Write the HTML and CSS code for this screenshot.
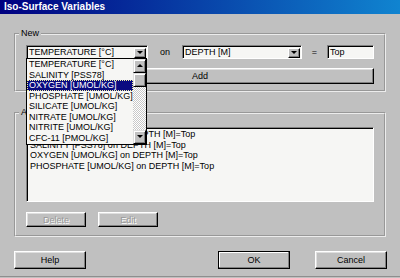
FILE: index.html
```html
<!DOCTYPE html>
<html lang="en">
<head>
    <meta charset="UTF-8">
    <meta name="viewport" content="width=device-width, initial-scale=1.0">
    <title>Iso-Surface Variables</title>
    <link rel="stylesheet" href="styles.css">
</head>
<body>
    <div class="dialog">
        <div class="titlebar">Iso-Surface Variables</div>
        <div class="dialog-body">
            <fieldset class="group">
                <legend>New</legend>
                <div class="group-body group-new">
                    <div class="var-row">
                        <div class="combo combo-var">
                            <span class="combo-text">TEMPERATURE [°C]</span>
                            <span class="combo-btn"></span>
                            <div class="dropdown">
                                <ul class="dropdown-items">
                                    <li>TEMPERATURE [°C]</li>
                                    <li>SALINITY [PSS78]</li>
                                    <li class="selected">OXYGEN [UMOL/KG]</li>
                                    <li>PHOSPHATE [UMOL/KG]</li>
                                    <li>SILICATE [UMOL/KG]</li>
                                    <li>NITRATE [UMOL/KG]</li>
                                    <li>NITRITE [UMOL/KG]</li>
                                    <li>CFC-11 [PMOL/KG]</li>
                                </ul>
                                <div class="scrollbar">
                                    <span class="sb-btn sb-up"></span>
                                    <span class="sb-thumb"></span>
                                    <span class="sb-track"></span>
                                    <span class="sb-btn sb-down"></span>
                                </div>
                            </div>
                        </div>
                        <span class="row-label label-on">on</span>
                        <div class="combo combo-surf">
                            <span class="combo-text">DEPTH [M]</span>
                            <span class="combo-btn"></span>
                        </div>
                        <span class="row-label label-eq">=</span>
                        <div class="field">Top</div>
                    </div>
                    <button class="btn btn-add">Add</button>
                </div>
            </fieldset>

            <fieldset class="group group-second">
                <legend>Active Variables</legend>
                <div class="group-body group-active">
                    <ul class="listbox">
                        <li>TEMPERATURE [°C] on DEPTH [M]=Top</li>
                        <li>SALINITY [PSS78] on DEPTH [M]=Top</li>
                        <li>OXYGEN [UMOL/KG] on DEPTH [M]=Top</li>
                        <li>PHOSPHATE [UMOL/KG] on DEPTH [M]=Top</li>
                    </ul>
                    <div class="list-actions">
                        <button class="btn btn-small" disabled>Delete</button>
                        <button class="btn btn-small" disabled>Edit</button>
                    </div>
                </div>
            </fieldset>

            <div class="actions">
                <button class="btn btn-wide">Help</button>
                <button class="btn btn-wide btn-default">OK</button>
                <button class="btn btn-wide">Cancel</button>
            </div>
        </div>
    </div>
</body>
</html>
```

FILE: styles.css
```css
body {
    margin: 0;
    background-color: #c0c0c0;
    font-family: 'Liberation Sans', Arial, sans-serif;
    font-size: 9px;
    color: #000;
}

.dialog {
    height: 276px;
    border-bottom: 1px solid #8e8e8e;
}

.titlebar {
    height: 14px;
    line-height: 14px;
    padding-left: 4px;
    background: linear-gradient(90deg, #000080, #1084d0);
    color: #fff;
    font-size: 10px;
    font-weight: bold;
}

.dialog-body {
    padding: 14px 14px 0 14px;
}

/* group boxes */
.group {
    margin: 0;
    padding: 0;
    min-width: 0;
    border: 2px groove #ececec;
}

.group legend {
    margin-left: 3px;
    padding: 0 2px;
    line-height: 11px;
}

.group-second {
    margin-top: 15px;
}

.group-body {
    padding: 6px 10px 6px 10px;
}

.group-active {
    padding-top: 9px;
    padding-bottom: 8px;
}

/* new variable row */
.var-row {
    display: flex;
    align-items: center;
}

.combo {
    position: relative;
    display: flex;
    align-items: center;
    height: 14px;
    box-sizing: border-box;
    border: 1px solid;
    border-color: #808080 #fff #fff #808080;
    box-shadow: inset 1px 1px #000;
    background-color: #f6f6f4;
}

.combo-var {
    width: 122px;
}

.combo-surf {
    width: 120px;
}

.combo-text {
    padding-left: 2px;
    white-space: nowrap;
}

.combo-btn {
    position: relative;
    margin-left: auto;
    margin-right: 1px;
    margin-top: 1px;
    width: 12px;
    height: 10px;
    box-sizing: border-box;
    background-color: #c0c0c0;
    border: 1px solid;
    border-color: #fff #000 #000 #fff;
    box-shadow: inset -1px -1px #808080;
}

.combo-btn::after,
.sb-btn::after {
    content: '';
    position: absolute;
    left: 50%;
    top: 50%;
    margin-left: -3px;
    margin-top: -2px;
    border-left: 3px solid transparent;
    border-right: 3px solid transparent;
    border-top: 3px solid #000;
}

.row-label {
    text-align: center;
}

.label-on {
    width: 34px;
}

.label-eq {
    width: 25px;
}

.field {
    width: 47px;
    height: 14px;
    line-height: 12px;
    box-sizing: border-box;
    padding-left: 2px;
    border: 1px solid;
    border-color: #808080 #fff #fff #808080;
    box-shadow: inset 1px 1px #000;
    background-color: #f6f6f4;
}

/* open dropdown list */
.dropdown {
    position: absolute;
    top: 100%;
    left: -1px;
    z-index: 2;
    display: flex;
    width: 121px;
    height: 87px;
    box-sizing: border-box;
    border: 1px solid #000;
    background-color: #f6f6f4;
}

.dropdown-items {
    flex: 1;
    margin: 0;
    padding: 0;
    list-style: none;
    overflow: hidden;
}

.dropdown-items li {
    line-height: 10.5px;
    padding-left: 2px;
    white-space: nowrap;
}

.dropdown-items li.selected {
    background-color: #0a0a80;
    color: #fff;
    outline: 1px dotted #f0f0a0;
    outline-offset: -1px;
}

.scrollbar {
    display: flex;
    flex-direction: column;
    width: 13px;
}

.sb-btn,
.sb-thumb {
    position: relative;
    height: 14px;
    box-sizing: border-box;
    background-color: #c0c0c0;
    border: 1px solid;
    border-color: #dfdfdf #000 #000 #dfdfdf;
    box-shadow: inset 1px 1px #fff, inset -1px -1px #808080;
}

.sb-up::after {
    border-top: 0;
    border-bottom: 3px solid #000;
}

.sb-track {
    flex: 1;
    background-image: conic-gradient(#fff 25%, #c8c8c8 0 50%, #fff 0 75%, #c8c8c8 0);
    background-size: 2px 2px;
}

/* buttons */
.btn {
    padding: 0;
    font-family: inherit;
    font-size: 9px;
    font-weight: normal;
    color: #000;
    background-color: #c0c0c0;
    box-sizing: border-box;
    border: 1px solid;
    border-color: #fff #000 #000 #fff;
    box-shadow: inset -1px -1px #808080, inset 1px 1px #dfdfdf;
}

.btn:disabled {
    color: #9a9a9a;
    text-shadow: 1px 1px #fff;
}

.btn-add {
    display: block;
    width: 100%;
    height: 16px;
    margin-top: 9px;
}

/* active variables list */
.listbox {
    height: 75px;
    margin: 0;
    padding: 1px 0 0 2px;
    list-style: none;
    box-sizing: border-box;
    border: 1px solid;
    border-color: #808080 #fff #fff #808080;
    box-shadow: inset 1px 1px #000;
    background-color: #f6f6f4;
}

.listbox li {
    line-height: 10.7px;
    padding-left: 1px;
    white-space: nowrap;
}

.list-actions {
    display: flex;
    gap: 12px;
    margin-top: 10px;
}

.btn-small {
    width: 60px;
    height: 15px;
}

/* dialog buttons */
.actions {
    display: flex;
    gap: 25px;
    margin-top: 14px;
    margin-right: -1px;
}

.btn-wide {
    width: 72px;
    height: 18px;
}

.btn-default {
    margin-left: auto;
    border-color: #000;
    box-shadow: inset -1px -1px #808080, inset 1px 1px #fff;
}
```
